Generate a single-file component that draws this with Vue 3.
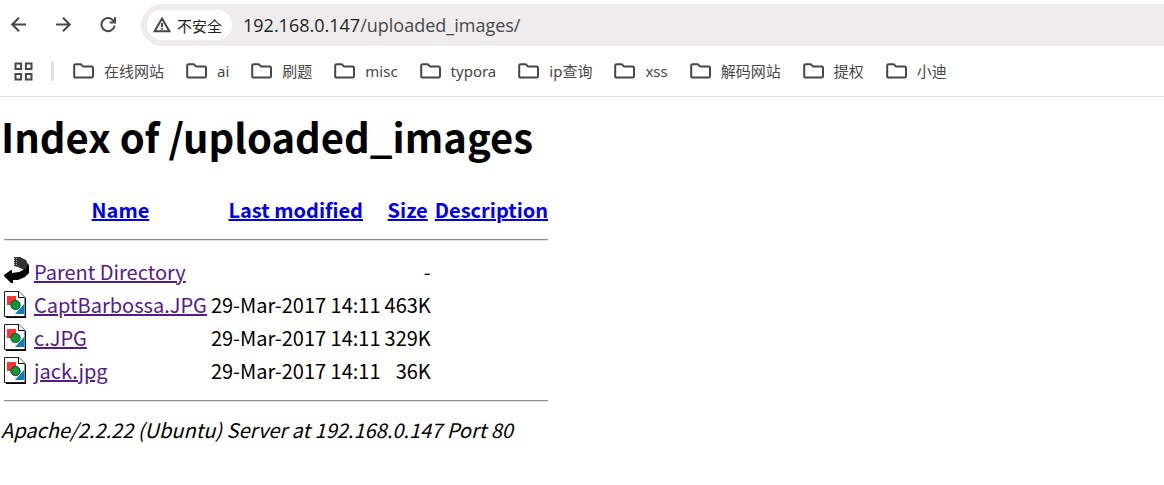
<script setup>
const bookmarks = ['在线网站', 'ai', '刷题', 'misc', 'typora', 'ip查询', 'xss', '解码网站', '提权', '小迪']
const columns = ['Name', 'Last modified', 'Size', 'Description']
const files = [
  { name: 'CaptBarbossa.JPG', modified: '29-Mar-2017 14:11', size: '463K' },
  { name: 'c.JPG', modified: '29-Mar-2017 14:11', size: '329K' },
  { name: 'jack.jpg', modified: '29-Mar-2017 14:11', size: '36K' },
]
</script>

<template>
  <div class="browser">
    <header class="chrome">
      <nav class="toolbar" aria-label="Navigation">
        <button class="tool" type="button" aria-label="Back">
          <svg width="18" height="18" viewBox="0 0 18 18"><path d="M16 8.5H2.5M9 1.7 2.2 8.5 9 15.3" /></svg>
        </button>
        <button class="tool" type="button" aria-label="Forward">
          <svg width="18" height="18" viewBox="0 0 18 18"><path d="M1 8.5h13.5M8 1.7 14.8 8.5 8 15.3" /></svg>
        </button>
        <button class="tool" type="button" aria-label="Reload">
          <svg width="18" height="18" viewBox="0 0 18 18"><path d="M14.6 9.7A6.6 6.6 0 1 1 13.2 4.4L14.6 6M15 1.3v5.2H9.8" /></svg>
        </button>
        <div class="omnibox">
          <button class="security" type="button">
            <svg width="18" height="16" viewBox="0 0 18 16">
              <path d="M9 1.6 16.4 14.2H1.6Z" />
              <path d="M9 6v4M9 11v1.6" />
            </svg>
            <span>不安全</span>
          </button>
          <div class="url"><span class="host">192.168.0.147</span>/uploaded_images/</div>
        </div>
      </nav>
      <nav class="bookmarks" aria-label="Bookmarks">
        <button class="apps" type="button" aria-label="Apps">
          <svg width="20" height="20" viewBox="0 0 20 20">
            <path d="M2.5 2.5h5.6v5.6H2.5zM12.9 2.5h5.6v5.6h-5.6zM2.5 12.9h5.6v5.6H2.5zM12.9 12.9h5.6v5.6h-5.6z" />
          </svg>
        </button>
        <span class="divider"></span>
        <button v-for="label in bookmarks" :key="label" class="bookmark" type="button">
          <svg width="22" height="16" viewBox="0 0 22 16">
            <path d="M2.6 1.2h5.2l2.4 2.4h8.4q1.4 0 1.4 1.4v8.2q0 1.4-1.4 1.4h-16q-1.4 0-1.4-1.4V2.6q0-1.4 1.4-1.4Z" />
          </svg>
          <span>{{ label }}</span>
        </button>
      </nav>
    </header>

    <main class="page">
      <h1>Index of /uploaded_images</h1>
      <table>
        <thead>
          <tr class="head">
            <th></th>
            <th v-for="column in columns" :key="column"><a href="#">{{ column }}</a></th>
          </tr>
        </thead>
        <tbody>
          <tr><td colspan="5" class="rule"><hr></td></tr>
          <tr class="parent">
            <td class="icon">
              <svg width="26" height="30" viewBox="0 0 26 30">
                <path fill="#333" d="M10 1h6l6 3 3 6-5 4-6-3-4-1Z" />
                <path fill="none" stroke="#aaa" stroke-dasharray="1 1" d="M10.5 2v8M12.5 2v8" />
                <path fill="#000" d="M25 8v9l-4 4-7 3H9v3H7L0 20v-1l7-5h1v3l7-1 6-3Z" />
              </svg>
            </td>
            <td><a href="#" class="visited">Parent Directory</a></td>
            <td></td>
            <td class="right">-</td>
            <td></td>
          </tr>
          <tr v-for="file in files" :key="file.name" class="file">
            <td class="icon">
              <svg width="26" height="28" viewBox="0 0 26 28">
                <path fill="#000" d="M2 26h19V7h1v20H2Z" />
                <path fill="#fff" stroke="#222" d="M.5.5H15l6 6v19H.5Z" />
                <path fill="#fff" stroke="#000" d="M14.5.5v6h6" />
                <path fill="#ff3333" d="M3 5h9v9H3Z" />
                <path fill="#0a7fc0" d="M20 13v10H11Z" />
                <circle cx="11.5" cy="14" r="4.6" fill="#099b3b" stroke="#173d24" />
              </svg>
            </td>
            <td><a href="#" class="visited">{{ file.name }}</a></td>
            <td class="right">{{ file.modified }}</td>
            <td class="right">{{ file.size }}</td>
            <td></td>
          </tr>
          <tr><td colspan="5" class="rule"><hr></td></tr>
        </tbody>
      </table>
      <address>Apache/2.2.22 (Ubuntu) Server at 192.168.0.147 Port 80</address>
    </main>
  </div>
</template>

<style>
body {
  margin: 0;
  background: #fff;
}
</style>

<style scoped>
.browser {
  font-family: "Noto Sans CJK SC", sans-serif;
  color: #000;
}

button {
  display: flex;
  align-items: center;
  padding: 0;
  border: 0;
  background: none;
  color: inherit;
  font: inherit;
}

svg {
  display: block;
  flex: none;
}

.chrome {
  border-bottom: 1px solid #dedede;
  color: #474747;
  font-family: "Noto Sans", "Noto Sans CJK SC", sans-serif;
}

.chrome svg {
  fill: none;
  stroke: #474747;
  stroke-width: 2;
}

.toolbar {
  display: flex;
  align-items: center;
  gap: 27px;
  padding: 4px 0 0 10px;
}

.omnibox {
  display: flex;
  flex: 1;
  align-items: center;
  gap: 11px;
  height: 42px;
  margin-left: -4px;
  padding-left: 6px;
  border-radius: 21px 0 0 21px;
  background: #eeeced;
}

.security {
  gap: 6px;
  height: 30px;
  padding: 0 10px 0 6px;
  border-radius: 15px;
  background: #fff;
  color: #1f1f1f;
  font-size: 15px;
}

.url {
  font-family: "Open Sans", sans-serif;
  font-size: 18px;
}

.host {
  color: #1f1f1f;
}

.bookmarks {
  display: flex;
  align-items: center;
  height: 50px;
  padding-left: 13px;
}

.divider {
  width: 3px;
  height: 20px;
  margin: 0 19px 0 18px;
  border-radius: 2px;
  background: #e0e0e0;
}

.bookmark {
  gap: 9px;
  margin-right: 22px;
  font-size: 15px;
  line-height: 20px;
  white-space: nowrap;
}

.page {
  padding-left: 1px;
}

h1 {
  margin: 8px 0 25px;
  font-size: 40px;
  line-height: 62px;
}

table {
  border-spacing: 2px;
  font-size: 20px;
  line-height: 29px;
}

th,
td {
  padding: 1px;
  white-space: nowrap;
}

a {
  color: #0000ee;
}

.visited {
  color: #551a8b;
}

.right {
  text-align: right;
}

.rule {
  padding: 12px 1px;
  line-height: 0;
}

hr {
  margin: 0;
  border: 0;
  border-top: 1px solid #8c8c8c;
  border-bottom: 1px solid #e8e8e8;
}

address {
  font-size: 20px;
  line-height: 28px;
}
</style>
